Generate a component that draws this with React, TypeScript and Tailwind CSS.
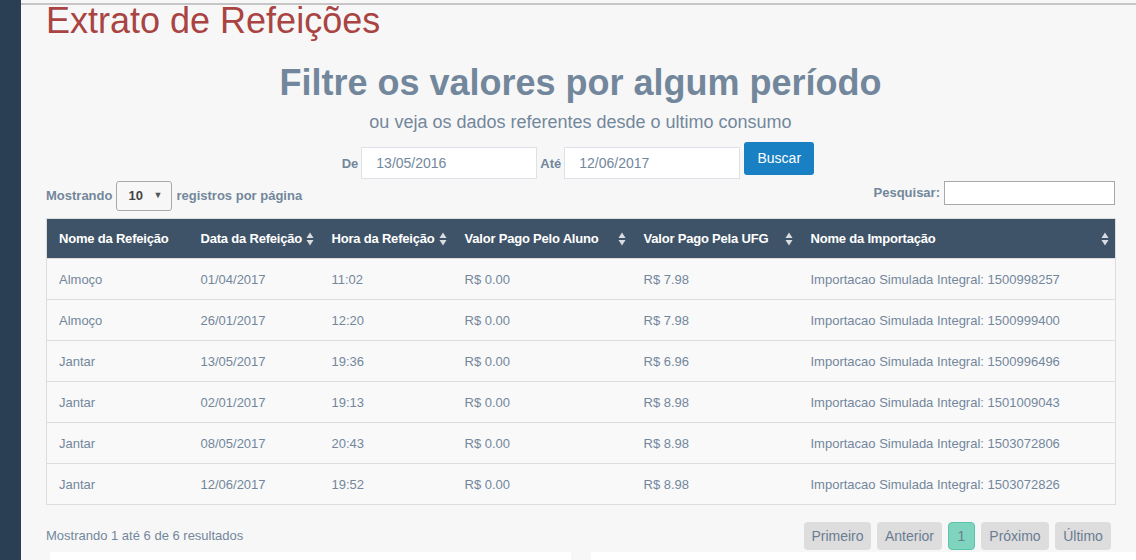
import React from 'react';

const rows = [
  ['Almoço', '01/04/2017', '11:02', 'R$ 0.00', 'R$ 7.98', 'Importacao Simulada Integral: 1500998257'],
  ['Almoço', '26/01/2017', '12:20', 'R$ 0.00', 'R$ 7.98', 'Importacao Simulada Integral: 1500999400'],
  ['Jantar', '13/05/2017', '19:36', 'R$ 0.00', 'R$ 6.96', 'Importacao Simulada Integral: 1500996496'],
  ['Jantar', '02/01/2017', '19:13', 'R$ 0.00', 'R$ 8.98', 'Importacao Simulada Integral: 1501009043'],
  ['Jantar', '08/05/2017', '20:43', 'R$ 0.00', 'R$ 8.98', 'Importacao Simulada Integral: 1503072806'],
  ['Jantar', '12/06/2017', '19:52', 'R$ 0.00', 'R$ 8.98', 'Importacao Simulada Integral: 1503072826'],
];

const columns = [
  { label: 'Nome da Refeição', width: 'w-[142px]', sort: false },
  { label: 'Data da Refeição', width: 'w-[131px]', sort: true },
  { label: 'Hora da Refeição', width: 'w-[133px]', sort: true },
  { label: 'Valor Pago Pelo Aluno', width: 'w-[179px]', sort: true },
  { label: 'Valor Pago Pela UFG', width: 'w-[167px]', sort: true },
  { label: 'Nome da Importação', width: 'w-[317px]', sort: true },
];

function SortIcon() {
  return (
    <svg width="8" height="14" viewBox="0 0 8 14" className="shrink-0">
      <polygon points="4,0.5 7.5,6 0.5,6" fill="#d9dde2" />
      <polygon points="0.5,8 7.5,8 4,13.5" fill="#d9dde2" />
    </svg>
  );
}

export default function App() {
  return (
    <div
      className="flex h-[560px] overflow-hidden bg-[#f7f7f7] text-[#73879c]"
      style={{ fontFamily: '"Liberation Sans", Arial, sans-serif' }}
    >
      {/* Sidebar */}
      <div className="w-[21px] shrink-0 bg-[#2a3f54]" />

      <div className="flex-1 min-w-0">
        <div className="mt-[3px] border-t-2 border-[#c6c6c6]" />

        <div className="pl-[25px] pr-[21px]">
          <h1 className="text-[36px] leading-[32px] text-[#a94442]">Extrato de Refeições</h1>

          <h2 className="mt-[26px] text-center text-[36px] leading-[40px] font-bold text-[#73879c]">
            Filtre os valores por algum período
          </h2>
          <p className="mt-[8px] text-center text-[18px] leading-[22px]">
            ou veja os dados referentes desde o ultimo consumo
          </p>

          {/* Filter */}
          <div className="mt-[9px] mr-[5px] flex items-start justify-center text-[13px]">
            <span className="mt-[12px] mr-[3px] font-bold">De</span>
            <div className="mt-[5px] flex h-[32px] w-[176px] items-center border border-[#dde2e8] bg-white pl-[14px] text-[14px]">
              13/05/2016
            </div>
            <span className="mt-[12px] ml-[3px] mr-[3px] font-bold">Até</span>
            <div className="mt-[5px] flex h-[32px] w-[176px] items-center border border-[#dde2e8] bg-white pl-[14px] text-[14px]">
              12/06/2017
            </div>
            <button className="ml-[4px] h-[33px] w-[70px] rounded-[3px] bg-[#1a80c4] text-[14px] text-white">
              Buscar
            </button>
          </div>

          {/* Length + search */}
          <div className="mt-[2px] flex items-start justify-between text-[13px] font-bold">
            <div className="flex items-center">
              <span>Mostrando</span>
              <div className="ml-[4px] mr-[4px] flex h-[30px] w-[56px] items-center justify-between rounded-[3px] border border-[#a9a9a9] bg-[#f7f7f7] pl-[11px] pr-[9px] text-[#555]">
                <span className="text-[13px] font-bold text-[#444]">10</span>
                <span className="text-[9px] text-[#555]">▼</span>
              </div>
              <span>registros por página</span>
            </div>
            <div className="flex items-center">
              <span>Pesquisar:</span>
              <div className="ml-[4px] h-[24px] w-[171px] border border-[#a9a9a9] bg-white" />
            </div>
          </div>

          {/* Table */}
          <table className="mt-[7px] w-[1069px] table-fixed border-collapse border border-[#dddddd] text-[13px]">
            <thead>
              <tr className="h-[40px] bg-[#3e5367] text-white">
                {columns.map((c) => (
                  <th key={c.label} className={`${c.width} p-0 text-left font-bold`}>
                    <div className="flex items-center justify-between whitespace-nowrap pl-[12px] pr-[6px]">
                      <span className="tracking-[-0.2px]">{c.label}</span>
                      {c.sort && <SortIcon />}
                    </div>
                  </th>
                ))}
              </tr>
            </thead>
            <tbody>
              {rows.map((r, i) => (
                <tr key={i} className="h-[41px] border-t border-[#dddddd] bg-[#f9f9f9]">
                  {r.map((cell, j) => (
                    <td key={j} className="px-[12px] pt-[1px] pb-0">
                      {cell}
                    </td>
                  ))}
                </tr>
              ))}
            </tbody>
          </table>

          {/* Footer */}
          <div className="mt-[17px] flex h-[28px] items-center justify-between text-[13px]">
            <span>Mostrando 1 até 6 de 6 resultados</span>
            <div className="mr-[4px] flex gap-[6px] text-[14px] text-[#6b7c93]">
              <span className="flex h-[28px] w-[67px] items-center justify-center rounded-[4px] bg-[#dddddd]">Primeiro</span>
              <span className="flex h-[28px] w-[65px] items-center justify-center rounded-[4px] bg-[#dddddd]">Anterior</span>
              <span className="flex h-[28px] w-[27px] items-center justify-center rounded-[4px] border border-[#5cc4a9] bg-[#7fd4bf]">1</span>
              <span className="flex h-[28px] w-[68px] items-center justify-center rounded-[4px] bg-[#dddddd]">Próximo</span>
              <span className="flex h-[28px] w-[56px] items-center justify-center rounded-[4px] bg-[#dddddd]">Último</span>
            </div>
          </div>

          {/* Next panels */}
          <div className="mt-[2px] -mr-[21px] flex gap-[20px] pl-[4px]">
            <div className="h-[40px] w-[521px] bg-white" />
            <div className="h-[40px] flex-1 bg-white" />
          </div>
        </div>
      </div>
    </div>
  );
}
